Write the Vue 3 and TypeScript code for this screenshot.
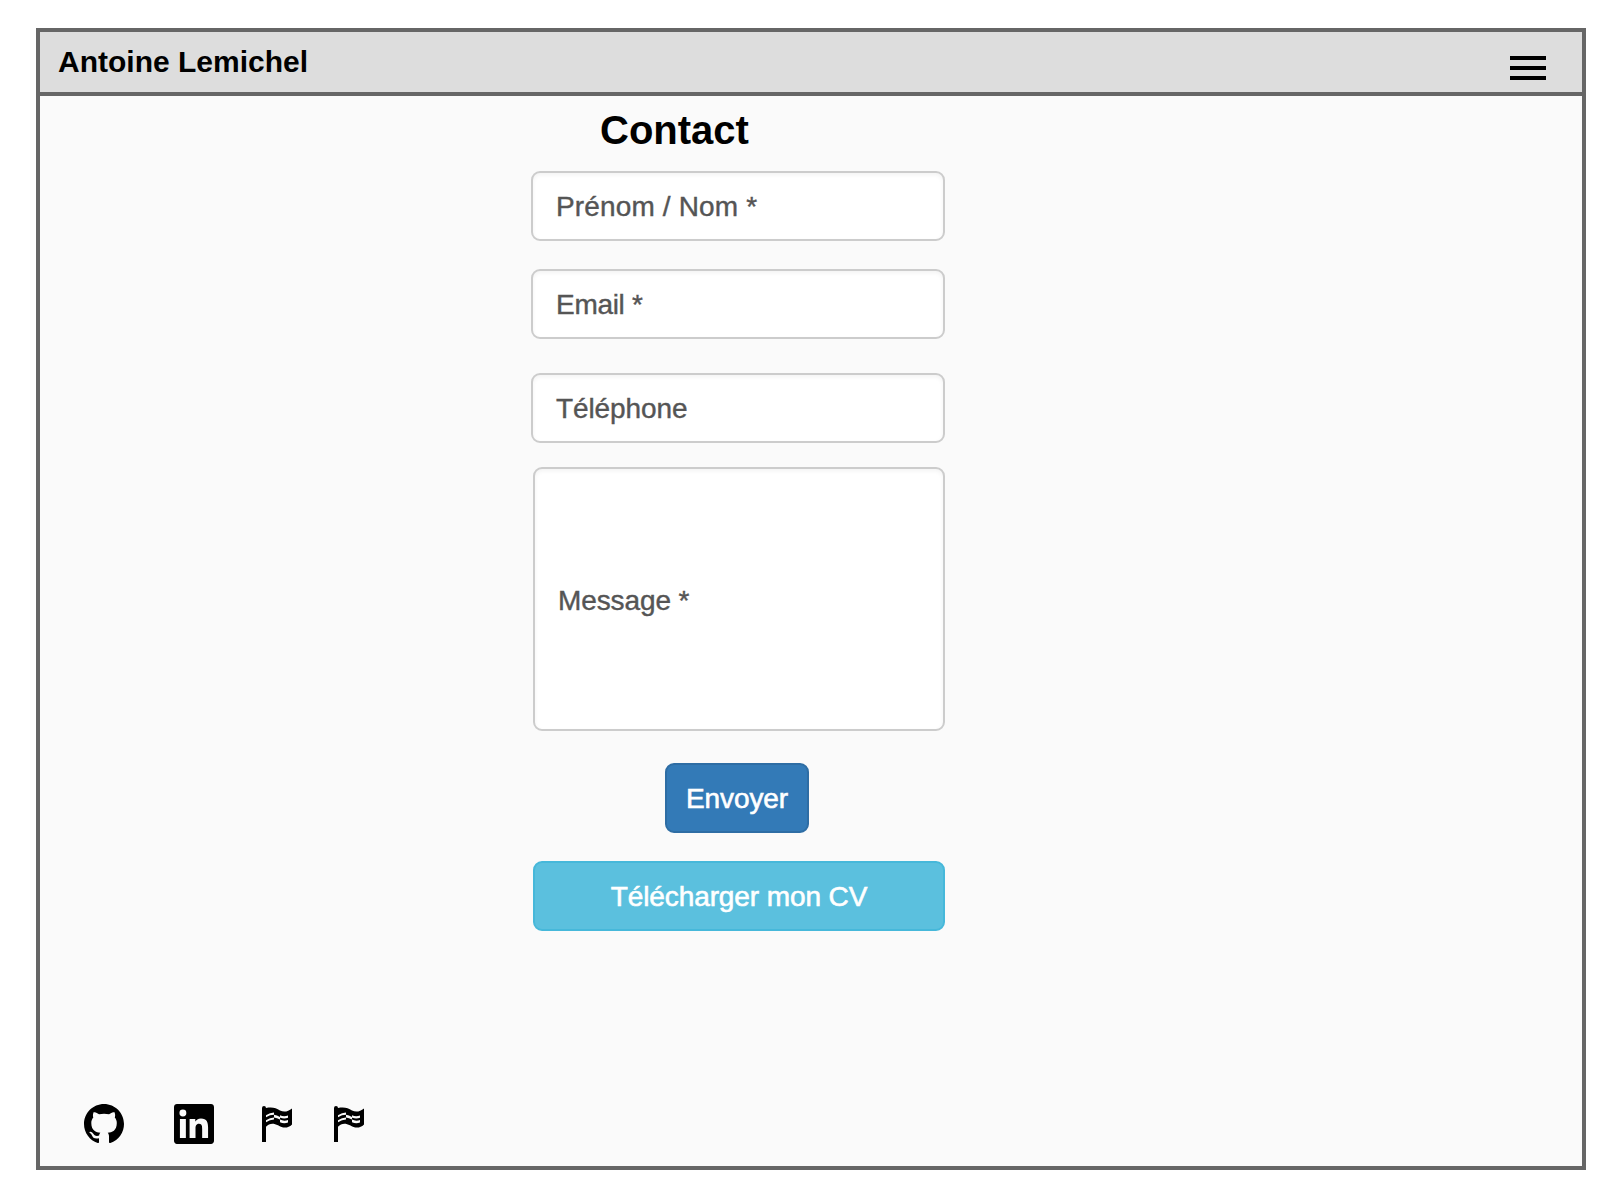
<script setup lang="ts">
interface Field {
  id: string
  label: string
}

const fields: Field[] = [
  { id: 'name', label: 'Prénom / Nom *' },
  { id: 'email', label: 'Email *' },
  { id: 'phone', label: 'Téléphone' },
]

const languages: string[] = ['fr', 'en']
</script>

<template>
  <div class="page">
    <div class="frame">
      <header class="bar">
        <span class="brand">Antoine Lemichel</span>
        <div class="burger"><i></i><i></i><i></i></div>
      </header>
      <main class="content">
        <h1 class="title">Contact</h1>
        <form class="form" @submit.prevent>
          <div v-for="field in fields" :key="field.id" class="field" :class="field.id">
            <span>{{ field.label }}</span>
          </div>
          <div class="field message"><span>Message *</span></div>
          <button class="btn send" type="submit"><span>Envoyer</span></button>
          <button class="btn download" type="button"><span>Télécharger mon CV</span></button>
        </form>
      </main>
      <footer class="links">
        <svg class="github" viewBox="0 0 16 16" width="40" height="40">
          <path d="M8 0C3.58 0 0 3.58 0 8c0 3.54 2.29 6.53 5.47 7.59.4.07.55-.17.55-.38 0-.19-.01-.82-.01-1.49-2.01.37-2.53-.49-2.69-.94-.09-.23-.48-.94-.82-1.13-.28-.15-.68-.52-.01-.53.63-.01 1.08.58 1.23.82.72 1.21 1.87.87 2.33.66.07-.52.28-.87.51-1.07-1.78-.2-3.64-.89-3.64-3.95 0-.87.31-1.59.82-2.15-.08-.2-.36-1.02.08-2.12 0 0 .67-.21 2.2.82.64-.18 1.32-.27 2-.27s1.36.09 2 .27c1.53-1.04 2.2-.82 2.2-.82.44 1.1.16 1.92.08 2.12.51.56.82 1.27.82 2.15 0 3.07-1.87 3.75-3.65 3.95.29.25.54.73.54 1.48 0 1.07-.01 1.93-.01 2.2 0 .21.15.46.55.38A8.01 8.01 0 0 0 16 8c0-4.42-3.58-8-8-8z" />
        </svg>
        <svg class="linkedin" viewBox="0 0 24 24" width="40" height="40">
          <path d="M20.447 20.452h-3.554v-5.569c0-1.328-.027-3.037-1.852-3.037-1.853 0-2.136 1.445-2.136 2.939v5.667H9.351V9h3.414v1.561h.046c.477-.9 1.637-1.85 3.37-1.85 3.601 0 4.267 2.37 4.267 5.455v6.286zM5.337 7.433a2.062 2.062 0 0 1-2.063-2.065 2.064 2.064 0 1 1 2.063 2.065zm1.782 13.019H3.555V9h3.564v11.452zM22.225 0H1.771C.792 0 0 .774 0 1.729v20.542C0 23.227.792 24 1.771 24h20.451C23.2 24 24 23.227 24 22.271V1.729C24 .774 23.2 0 22.222 0h.003z" />
        </svg>
        <svg v-for="lang in languages" :key="lang" class="flag" viewBox="0 0 30 36" width="30" height="36">
          <path d="M0 2a2 2 0 0 1 4 0C10 .8 14 1.800 18 4.500c4 2 8 1.200 12-2V18.500c-4 4-9 4-14 .8C11 16.500 7 17.500 4 20.800V36H0z" />
          <path class="stripe" d="M4 9.200Q8 6.600 12 6.600V8.800Q8 8.800 4 11.200zM4 14.200Q8 11.600 12 11.600V13.600Q8 13.600 4 16.200zM12 8.800Q15 9.300 18 11V13.600Q15 12 12 11.600zM18 9.300Q22 11.100 26 9.500V11.800Q22 13.400 18 11.600zM18 13.600Q22 15.600 26 14V16.500Q22 18.100 18 16.200z" />
        </svg>
      </footer>
    </div>
  </div>
</template>

<style>
body {
  margin: 0;
  background: #fff;
}
</style>

<style scoped>
.page {
  box-sizing: border-box;
  width: 1600px;
  height: 1200px;
  padding: 28px 14px 30px 36px;
  overflow: hidden;
  font-family: "Liberation Sans", Arial, sans-serif;
}
.frame {
  box-sizing: border-box;
  width: 1550px;
  height: 1142px;
  border: 4px solid #666;
  background: #fafafa;
  display: flex;
  flex-direction: column;
}
.bar {
  box-sizing: border-box;
  height: 64px;
  flex: none;
  border-bottom: 4px solid #666;
  background: #ddd;
  display: flex;
  justify-content: space-between;
  align-items: flex-start;
  padding: 0 36px 0 18px;
}
.brand {
  font-size: 30px;
  font-weight: 700;
  line-height: 34px;
  margin-top: 13px;
}
.burger {
  width: 36px;
  margin-top: 24px;
  display: flex;
  flex-direction: column;
  gap: 6px;
}
.burger i {
  height: 4px;
  background: #000;
}
.content {
  flex: 1;
  padding-left: 491px;
}
.title {
  margin: 11px 0 0 69px;
  font-size: 40px;
  line-height: 46px;
  font-weight: 700;
}
.form {
  width: 414px;
  margin-top: 18px;
  display: flex;
  flex-direction: column;
  align-items: flex-end;
}
.field,
.btn {
  box-sizing: border-box;
  height: 70px;
  border: 2px solid #ccc;
  border-radius: 9px;
  font-family: inherit;
  font-size: 28px;
  line-height: 32px;
  display: flex;
  align-items: center;
  white-space: nowrap;
}
.field {
  width: 100%;
  padding: 1px 0 0 23px;
  background: #fff;
  color: #555;
  -webkit-text-stroke: 0.4px #555;
  box-shadow: inset 0 2px 4px rgba(0, 0, 0, 0.05);
}
.name {
  letter-spacing: 0.15px;
}
.email {
  margin-top: 28px;
  letter-spacing: -0.3px;
}
.phone {
  margin-top: 34px;
  letter-spacing: -0.1px;
}
.message {
  width: 412px;
  height: 264px;
  margin-top: 24px;
  padding-top: 3px;
  letter-spacing: -0.1px;
}
.btn {
  justify-content: center;
  padding: 1px 0 0;
  color: #fff;
  -webkit-text-stroke: 0.6px #fff;
  letter-spacing: -0.1px;
}
.send {
  width: 144px;
  margin: 32px 136px 0 0;
  background: #337ab7;
  border-color: #2e6da4;
}
.download {
  width: 412px;
  margin-top: 28px;
  background: #5bc0de;
  border-color: #46b8da;
}
.links {
  height: 40px;
  margin: 0 0 22px 44px;
  display: flex;
  align-items: center;
}
.linkedin {
  margin-left: 50px;
}
.flag {
  margin-left: 42px;
}
.linkedin + .flag {
  margin-left: 48px;
}
.stripe {
  fill: #fafafa;
}
</style>
